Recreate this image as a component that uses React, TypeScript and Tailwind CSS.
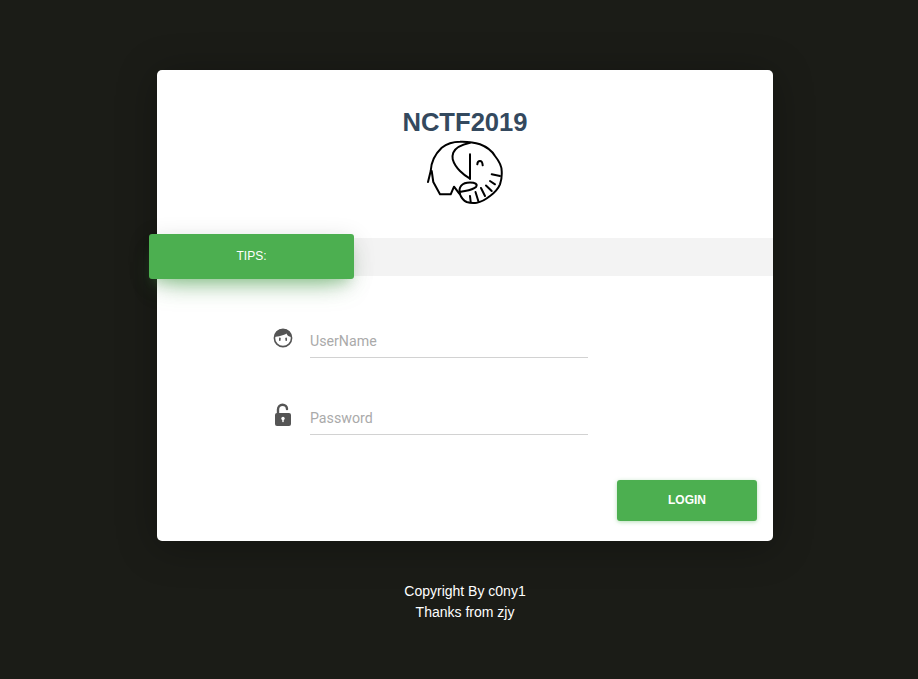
export default function App() {
  return (
    <div className="min-h-[679px] bg-[#1b1c17] flex flex-col items-center pt-[70px] pl-[12px] font-['Liberation_Sans',sans-serif]">
      <div className="w-[616px] h-[471px] bg-white rounded-[5px] shadow-[0_5px_40px_rgba(0,0,0,0.3)] flex flex-col">
        <h1 className="mt-[36px] h-[32px] leading-[32px] text-center text-[25.6px] font-bold text-[#34495e]">NCTF2019</h1>
        <div className="flex justify-center mt-[1px] h-[66px]">
          <svg className="ml-[1px] shrink-0" width="78" height="68" viewBox="0 0 78 66" fill="none" stroke="#000" strokeWidth="2" strokeLinecap="round" strokeLinejoin="round">
            <path d="M1 42 L3.7 31 C4 24 6 16 14.7 7.7 C20 3.5 27 1.7 33 1.7 C41 1.5 48 2.5 53 4.3 C60 7 65 11 68 16 C72 21 74.7 26 74.7 31 C75 36 74.5 40 73 44.3 C71 49 67 53 63 56 C58 60 54 62 49.7 62.7 C46 63.2 43 63 39.7 62 C36.5 60.5 34.5 58 33 54.3" />
            <path d="M4.7 31 L6.3 42 L13 54.3 L23.7 54.3 L27 46.7 L32.3 53.7" />
            <path d="M43 2.7 C35 4.5 28 8 26.3 12.7 C25.5 15 25 17 25.7 19.3 C27 24 30 28 33 31 C36 34 40 37 43 38.7" />
            <path d="M43 14.3 L43 38.7" />
            <path d="M50.3 24.3 C50.5 22 52 21 53 21 C54.5 21 55.5 23 55.7 25.3" />
            <path d="M73 36 L64.7 34.3" />
            <path d="M68 44.3 L63 41" />
            <path d="M64.7 51 L59 45.5" />
            <path d="M58 56 L54 48" />
            <path d="M51.3 61 L48.5 52" />
            <path d="M43.7 62 L43 56" />
            <path d="M33 54 C31 47 35 42.5 43 42.5 C48 42.5 51 44 49 47 C45 50.5 39 50.5 33 52" />
          </svg>
        </div>
        <div className="mt-[33px] h-[38px] bg-[#f3f3f3] flex items-center">
          <div className="-ml-2 mb-[1px] w-[205px] h-[45px] shrink-0 rounded-[3px] bg-[#4caf50] text-white text-[12px] leading-[16px] flex items-center justify-center pb-[2px] shadow-[0_14px_26px_-12px_rgba(76,175,80,0.6),0_4px_23px_0_rgba(0,0,0,0.12),0_8px_10px_-5px_rgba(76,175,80,0.25)]">
            TIPS:
          </div>
        </div>
        <div className="flex flex-col pl-[116px] mt-[44px] gap-[39px]">
          <div className="flex items-start">
            <svg className="mt-[8px]" width="20" height="20" viewBox="0 0 20 20">
              <circle cx="10" cy="10" r="8.6" fill="none" stroke="#555" strokeWidth="1.6" />
              <path d="M1.5 9 C2 3.5 6 1 10 1 C14 1 18 3.5 18.5 9 C15 8.5 14 7 13.5 5.5 C11 7.5 5 8.5 1.5 9 Z" fill="#555" />
              <rect x="6" y="9.5" width="1.6" height="3.5" rx="0.8" fill="#555" />
              <rect x="12.4" y="9.5" width="1.6" height="3.5" rx="0.8" fill="#555" />
            </svg>
            <div className="ml-[17px] w-[278px] h-[38px] border-b border-[#d2d2d2] pt-[10px] font-['Roboto',sans-serif] text-[14.2px] leading-[22px] text-[#aaaaaa]">UserName</div>
          </div>
          <div className="flex items-start">
            <svg className="mt-[6px]" width="20" height="24" viewBox="0 0 20 24">
              <path d="M5 11 V6.5 C5 3.5 7 1.7 9.5 1.7 C12 1.7 14 3.5 14 6" fill="none" stroke="#555" strokeWidth="2.4" strokeLinecap="round" />
              <rect x="2" y="10" width="16" height="13" rx="2" fill="#555" />
              <circle cx="10" cy="15.5" r="1.7" fill="#fff" />
              <rect x="9.3" y="15.5" width="1.4" height="3.6" fill="#fff" />
            </svg>
            <div className="ml-[17px] w-[278px] h-[38px] border-b border-[#d2d2d2] pt-[10px] font-['Roboto',sans-serif] text-[14.2px] leading-[22px] text-[#aaaaaa]">Password</div>
          </div>
        </div>
        <div className="flex justify-end pr-[16px] mt-[45px]">
          <button className="w-[140px] h-[41px] rounded-[3px] bg-[#4caf50] text-white text-[12px] font-bold pb-[2px] shadow-[0_1px_4px_rgba(76,175,80,0.4)]">LOGIN</button>
        </div>
      </div>
      <div className="mt-[40px] text-center text-white text-[14px] leading-[21px]">
        <p>Copyright By c0ny1</p>
        <p>Thanks from zjy</p>
      </div>
    </div>
  );
}
